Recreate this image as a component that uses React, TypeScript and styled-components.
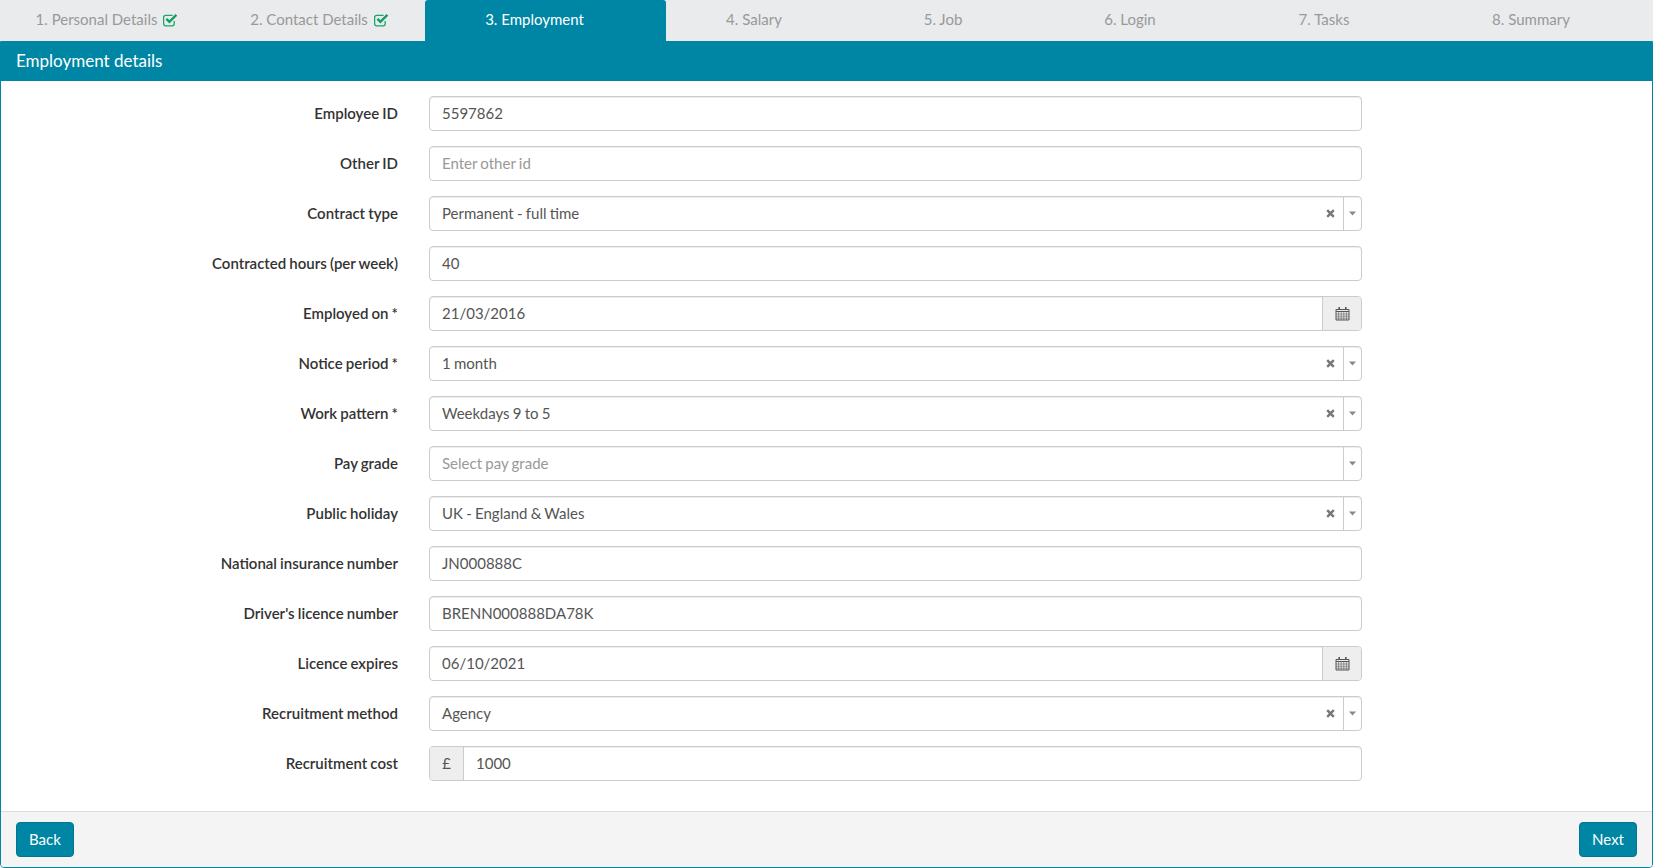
import React from "react";
import styled, { createGlobalStyle } from "styled-components";

const Global = createGlobalStyle`
  html, body { margin: 0; padding: 0; background: #fff; }
  body { font-family: Lato, "Liberation Sans", sans-serif; font-size: 15px; line-height: 1.42857; color: #333; }
  * { box-sizing: border-box; }
`;

const teal = "#0086a5";

const Page = styled.div`
  width: 1653px;
  height: 868px;
  display: flex;
  flex-direction: column;
  background: #fff;
`;
const Tabs = styled.nav`
  height: 41px;
  flex: none;
  display: flex;
  background: #e9ebed;
`;
const Tab = styled.div<{ $w: number; $active?: boolean }>`
  width: ${(p) => p.$w}px;
  flex: none;
  display: flex;
  align-items: center;
  justify-content: center;
  gap: 6px;
  padding-bottom: 1px;
  padding-right: ${(p) => (p.$active ? "22px" : "0")};
  color: ${(p) => (p.$active ? "#fff" : "#999")};
  background: ${(p) => (p.$active ? teal : "transparent")};
  border-radius: ${(p) => (p.$active ? "3px 3px 0 0" : "0")};
`;
const Panel = styled.main`
  flex: none;
  height: 827px;
  display: flex;
  flex-direction: column;
  border: 1px solid ${teal};
  border-radius: 0 0 4px 4px;
  overflow: hidden;
`;
const PanelHead = styled.h1`
  margin: 0;
  height: 39px;
  flex: none;
  background: ${teal};
  color: #fff;
  font-size: 17px;
  font-weight: 400;
  line-height: 37px;
  padding-left: 15px;
`;
const Form = styled.form`
  flex: 1;
  padding-top: 15px;
  display: flex;
  flex-direction: column;
  gap: 15px;
`;
const Row = styled.div`
  display: grid;
  grid-template-columns: 397px 933px;
  column-gap: 31px;
  align-items: center;
  height: 35px;
`;
const Label = styled.label`
  text-align: right;
  font-weight: 600;
  color: #333;
  word-spacing: -0.6px;
`;
const Field = styled.div`
  height: 35px;
  display: flex;
  border: 1px solid #ccc;
  border-radius: 4px;
  background: #fff;
  box-shadow: inset 0 1px 1px rgba(0, 0, 0, 0.075);
  overflow: hidden;
`;
const Value = styled.div<{ $placeholder?: boolean }>`
  flex: 1;
  padding: 0 12px;
  line-height: 33px;
  word-spacing: -0.6px;
  color: ${(p) => (p.$placeholder ? "#999" : "#555")};
`;
const Clear = styled.span`
  width: 26px;
  flex: none;
  display: flex;
  align-items: center;
  justify-content: center;
  color: #777;
`;
const Caret = styled.span`
  width: 18px;
  flex: none;
  display: flex;
  align-items: center;
  justify-content: center;
  border-left: 1px solid #ccc;
`;
const Addon = styled.span<{ $left?: boolean }>`
  flex: none;
  width: ${(p) => (p.$left ? "34px" : "39px")};
  display: flex;
  align-items: center;
  justify-content: center;
  background: #eee;
  color: #555;
  ${(p) => (p.$left ? "border-right" : "border-left")}: 1px solid #ccc;
`;
const Footer = styled.footer`
  height: 56px;
  flex: none;
  display: flex;
  justify-content: space-between;
  padding: 10px 15px 0;
  background: #f4f4f4;
  border-top: 1px solid #ddd;
`;
const Button = styled.button`
  height: 35px;
  padding: 0 12px;
  font: inherit;
  color: #fff;
  background: ${teal};
  border: 1px solid #007790;
  border-radius: 4px;
`;

const Check = () => (
  <svg width="15" height="14" viewBox="0 0 15 14" aria-hidden="true">
    <path d="M11.2 8V10.8a2 2 0 0 1-2 2H2.6a2 2 0 0 1-2-2V4.4a2 2 0 0 1 2-2h7" fill="none" stroke="#1aa56d" strokeWidth="1.3" />
    <path d="M3.4 5.8 L6.4 8.8 L13.4 1.8" fill="none" stroke="#12a05f" strokeWidth="2.4" />
  </svg>
);
const XMark = () => (
  <svg width="9" height="9" viewBox="0 0 9 9" aria-hidden="true">
    <path d="M1.2 1.2 L7.8 7.8 M7.8 1.2 L1.2 7.8" stroke="#777" strokeWidth="2.4" />
  </svg>
);
const Down = () => (
  <svg width="7" height="5" viewBox="0 0 7 5" aria-hidden="true">
    <path d="M0 0.5 H7 L3.5 4.5 Z" fill="#888" />
  </svg>
);
const Calendar = () => (
  <svg width="15" height="15" viewBox="0 0 15 15" aria-hidden="true">
    <path d="M1 3.5 H14 V14 H1 Z" fill="none" stroke="#555" strokeWidth="1" />
    <path d="M1 5.5 H14" stroke="#555" strokeWidth="1.2" />
    <path d="M1 8 H14 M1 10.2 H14 M1 12.2 H14 M3.6 5.5 V14 M6.2 5.5 V14 M8.8 5.5 V14 M11.4 5.5 V14" stroke="#555" strokeWidth="0.55" />
    <path d="M4.2 1 V4 M10.8 1 V4" stroke="#555" strokeWidth="1.6" />
  </svg>
);

const tabs = [
  { t: "1. Personal Details", w: 214, done: true },
  { t: "2. Contact Details", w: 211, done: true },
  { t: "3. Employment", w: 241, active: true },
  { t: "4. Salary", w: 176 },
  { t: "5. Job", w: 202 },
  { t: "6. Login", w: 172 },
  { t: "7. Tasks", w: 216 },
  { t: "8. Summary", w: 198 },
];

type F = { label: string; value: string; kind?: "select" | "date" | "money"; placeholder?: boolean; noClear?: boolean };
const fields: F[] = [
  { label: "Employee ID", value: "5597862" },
  { label: "Other ID", value: "Enter other id", placeholder: true },
  { label: "Contract type", value: "Permanent - full time", kind: "select" },
  { label: "Contracted hours (per week)", value: "40" },
  { label: "Employed on *", value: "21/03/2016", kind: "date" },
  { label: "Notice period *", value: "1 month", kind: "select" },
  { label: "Work pattern *", value: "Weekdays 9 to 5", kind: "select" },
  { label: "Pay grade", value: "Select pay grade", kind: "select", placeholder: true, noClear: true },
  { label: "Public holiday", value: "UK - England & Wales", kind: "select" },
  { label: "National insurance number", value: "JN000888C" },
  { label: "Driver's licence number", value: "BRENN000888DA78K" },
  { label: "Licence expires", value: "06/10/2021", kind: "date" },
  { label: "Recruitment method", value: "Agency", kind: "select" },
  { label: "Recruitment cost", value: "1000", kind: "money" },
];

export default function App() {
  return (
    <Page>
      <Global />
      <Tabs>
        {tabs.map((t) => (
          <Tab key={t.t} $w={t.w} $active={t.active}>
            {t.t}
            {t.done && <Check />}
          </Tab>
        ))}
      </Tabs>
      <Panel>
        <PanelHead>Employment details</PanelHead>
        <Form>
          {fields.map((f) => (
            <Row key={f.label}>
              <Label>{f.label}</Label>
              <Field>
                {f.kind === "money" && <Addon $left>£</Addon>}
                <Value $placeholder={f.placeholder}>{f.value}</Value>
                {f.kind === "select" && !f.noClear && (
                  <Clear>
                    <XMark />
                  </Clear>
                )}
                {f.kind === "select" && (
                  <Caret>
                    <Down />
                  </Caret>
                )}
                {f.kind === "date" && (
                  <Addon>
                    <Calendar />
                  </Addon>
                )}
              </Field>
            </Row>
          ))}
        </Form>
        <Footer>
          <Button type="button">Back</Button>
          <Button type="button">Next</Button>
        </Footer>
      </Panel>
    </Page>
  );
}
